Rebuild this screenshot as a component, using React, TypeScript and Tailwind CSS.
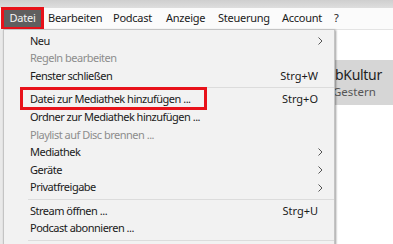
import React from "react";

type Item =
  | { kind: "sep" }
  | { kind: "item"; label: string; shortcut?: string; sub?: boolean; disabled?: boolean; boxed?: boolean };

const items: Item[] = [
  { kind: "item", label: "Neu", sub: true },
  { kind: "item", label: "Regeln bearbeiten", disabled: true },
  { kind: "item", label: "Fenster schließen", shortcut: "Strg+W" },
  { kind: "sep" },
  { kind: "item", label: "Datei zur Mediathek hinzufügen ...", shortcut: "Strg+O", boxed: true },
  { kind: "item", label: "Ordner zur Mediathek hinzufügen ..." },
  { kind: "item", label: "Playlist auf Disc brennen ...", disabled: true },
  { kind: "item", label: "Mediathek", sub: true },
  { kind: "item", label: "Geräte", sub: true },
  { kind: "item", label: "Privatfreigabe", sub: true },
  { kind: "sep" },
  { kind: "item", label: "Stream öffnen ...", shortcut: "Strg+U" },
  { kind: "item", label: "Podcast abonnieren ..." },
  { kind: "sep" },
];

function Chevron() {
  return (
    <svg width="5" height="8" viewBox="0 0 5 8" className="block">
      <path d="M0.5 0.5 L4 4 L0.5 7.5" fill="none" stroke="#555" strokeWidth="1" />
    </svg>
  );
}

export default function App() {
  const font = { fontFamily: '"Noto Sans", Lato, sans-serif' };
  return (
    <div className="relative w-[393px] h-[244px] overflow-hidden bg-white" style={font}>
      <div className="h-[8px] bg-gradient-to-b from-[#cfcfcf] to-[#dedede]" />
      <div className="h-[21px] bg-[#fbfbfb] flex items-center text-[11px] tracking-[-0.25px] text-[#1a1a1a]">
        <div className="ml-[1px] border-[3px] border-[#e8121a] h-[23px] w-[43px] flex items-center">
          <div className="bg-[#5f5f5f] text-[#f4f4f4] h-full w-full flex items-center justify-center">Datei</div>
        </div>
        <span className="ml-[4px] w-[65px]">Bearbeiten</span>
        <span className="w-[53px]">Podcast</span>
        <span className="w-[52px]">Anzeige</span>
        <span className="w-[64px]">Steuerung</span>
        <span className="w-[52px]">Account</span>
        <span>?</span>
      </div>
      <div className="flex h-[215px]">
        <div className="w-[3px] bg-[#e9e9e9]" />
        <div className="flex-1 flex flex-col">
          <div className="h-[31px] border-t border-[#e4e4e4]" />
          <div className="h-[45px] bg-[#d6d6d6] flex flex-col justify-center pl-[332px]">
            <div className="text-[14px] leading-[18px] tracking-[-0.3px] text-[#1e1e1e]">bKultur</div>
            <div className="text-[11.5px] leading-[16px] text-[#555] ml-[-2px]">Gestern</div>
          </div>
        </div>
      </div>

      <div className="absolute left-[3px] top-[29px] w-[332px] h-[230px] bg-[#f2f2f2] border border-[#c4c4c4] shadow-[1px_1px_2px_rgba(0,0,0,0.4)] pt-[2px] text-[11px] tracking-[-0.5px]">
        {items.map((it, i) =>
          it.kind === "sep" ? (
            <div key={i} className="h-[6px] flex items-center pl-[24px]">
              <div className="h-px w-full bg-[#dcdcdc]" />
            </div>
          ) : (
            <div key={i} className="relative h-[17.6px] flex items-center pl-[26px] pr-[16px]">
              {it.boxed && (
                <div className="absolute left-[16px] top-[-4px] w-[187px] h-[23px] border-[3px] border-[#e8121a]" />
              )}
              <span className={it.disabled ? "text-[#8d8d8d]" : "text-[#1a1a1a]"}>{it.label}</span>
              <span className="ml-auto flex items-center">
                {it.shortcut && <span className="text-[#1a1a1a] tracking-[0px]">{it.shortcut}</span>}
                {it.sub && (
                  <span className="mr-[-8px]">
                    <Chevron />
                  </span>
                )}
              </span>
            </div>
          )
        )}
      </div>
    </div>
  );
}
